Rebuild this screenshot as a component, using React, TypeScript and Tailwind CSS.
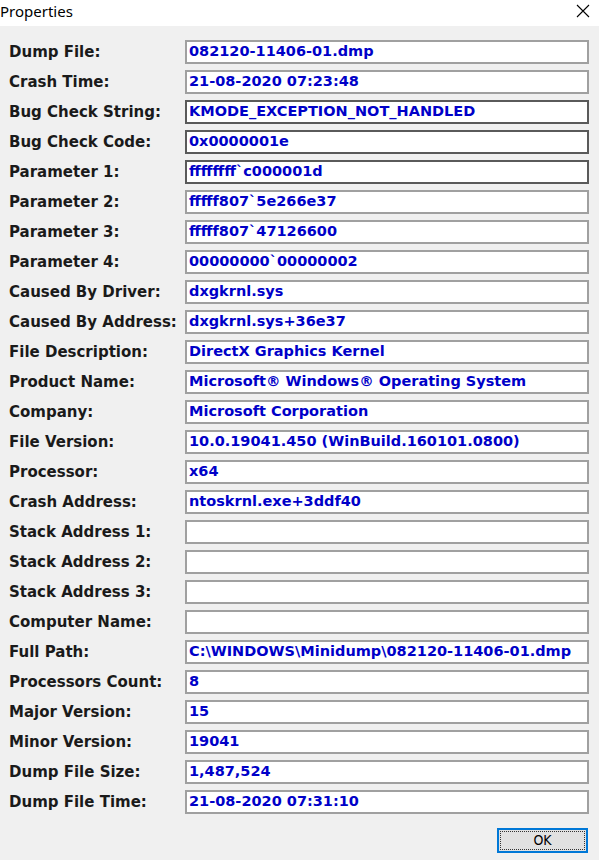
import React from "react";

const rows: [string, string, boolean?][] = [
  ["Dump File:", "082120-11406-01.dmp"],
  ["Crash Time:", "21-08-2020 07:23:48"],
  ["Bug Check String:", "KMODE_EXCEPTION_NOT_HANDLED", true],
  ["Bug Check Code:", "0x0000001e", true],
  ["Parameter 1:", "ffffffff`c000001d", true],
  ["Parameter 2:", "fffff807`5e266e37"],
  ["Parameter 3:", "fffff807`47126600"],
  ["Parameter 4:", "00000000`00000002"],
  ["Caused By Driver:", "dxgkrnl.sys"],
  ["Caused By Address:", "dxgkrnl.sys+36e37"],
  ["File Description:", "DirectX Graphics Kernel"],
  ["Product Name:", "Microsoft® Windows® Operating System"],
  ["Company:", "Microsoft Corporation"],
  ["File Version:", "10.0.19041.450 (WinBuild.160101.0800)"],
  ["Processor:", "x64"],
  ["Crash Address:", "ntoskrnl.exe+3ddf40"],
  ["Stack Address 1:", ""],
  ["Stack Address 2:", ""],
  ["Stack Address 3:", ""],
  ["Computer Name:", ""],
  ["Full Path:", "C:\\WINDOWS\\Minidump\\082120-11406-01.dmp"],
  ["Processors Count:", "8"],
  ["Major Version:", "15"],
  ["Minor Version:", "19041"],
  ["Dump File Size:", "1,487,524"],
  ["Dump File Time:", "21-08-2020 07:31:10"],
];

export default function App() {
  return (
    <div className="w-[599px] h-[860px] bg-[#f0f0f0] flex flex-col overflow-hidden">
      <div className="h-[26px] bg-white flex items-center justify-between shrink-0">
        <span className="text-[15px] text-black leading-none pl-0 pb-[4px]" style={{ fontFamily: '"Segoe UI", "Noto Sans", sans-serif' }}>
          Properties
        </span>
        <svg width="14" height="14" viewBox="0 0 14 14" className="mr-[9px] mb-[4px]">
          <path d="M1 1L13 13M13 1L1 13" stroke="#000" strokeWidth="1.1" fill="none" />
        </svg>
      </div>
      <div className="flex flex-col gap-[6px] pt-[14px]">
        {rows.map(([label, value, dark]) => (
          <div key={label} className="flex items-center h-[24px]">
            <div
              className="w-[185px] shrink-0 pl-[9px] text-[15px] font-bold text-[#1a1a1a] whitespace-nowrap"
              style={{ fontFamily: '"DejaVu Sans", Verdana, sans-serif' }}
            >
              {label}
            </div>
            <div
              className={
                "w-[404px] h-[24px] bg-white border-2 flex items-center pl-[2px] text-[14.5px] font-bold text-[#0000c8] whitespace-nowrap overflow-hidden " +
                (dark ? "border-[#5a5a5a]" : "border-[#a0a0a0]")
              }
              style={{ fontFamily: '"DejaVu Sans", Verdana, sans-serif' }}
            >
              {value}
            </div>
          </div>
        ))}
      </div>
      <div className="flex justify-end pr-[11px] pt-[14px]">
        <div className="w-[91px] h-[25px] border-2 border-[#0078d7] bg-[#e1e1e1] p-[1px]">
          <div className="w-full h-full border border-dotted border-[#333] flex items-center justify-center text-[14px] text-black" style={{ fontFamily: '"DejaVu Sans Condensed", "DejaVu Sans", sans-serif' }}>
            OK
          </div>
        </div>
      </div>
    </div>
  );
}
